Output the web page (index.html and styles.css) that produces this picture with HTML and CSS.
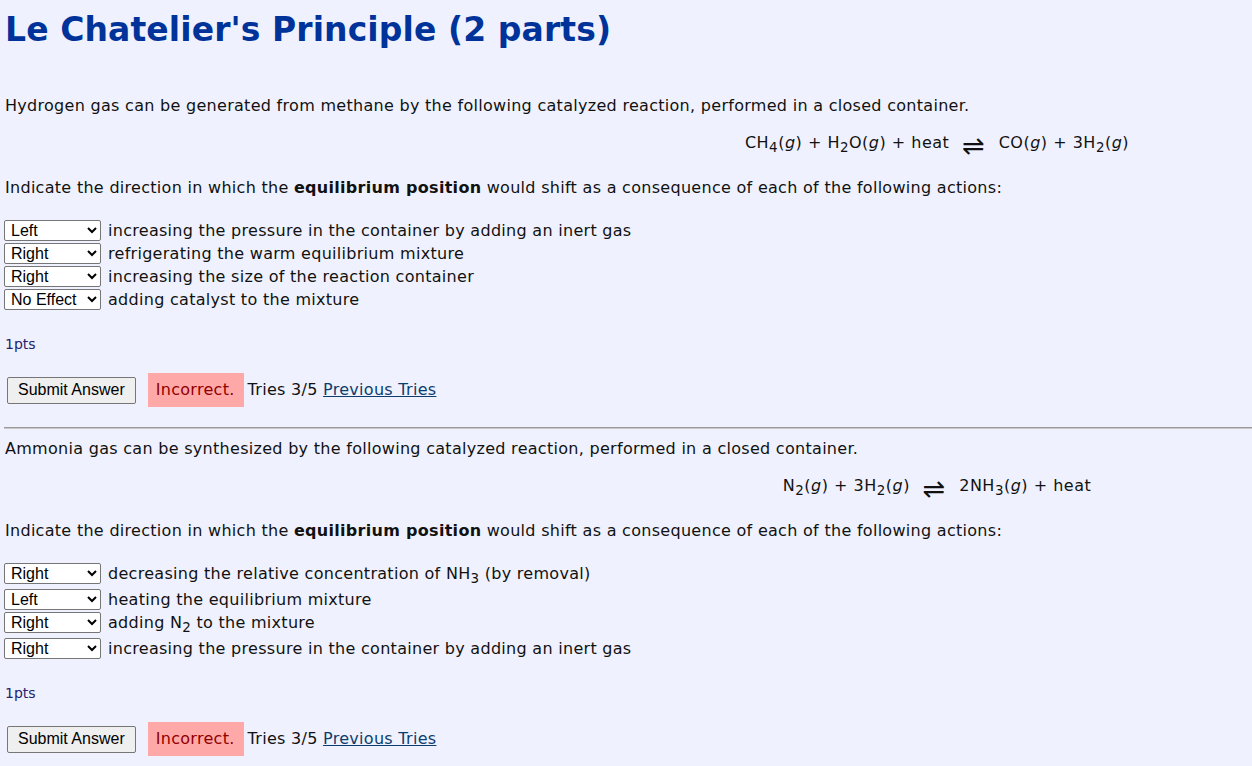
FILE: index.html
```html
<!DOCTYPE html>
<html>
<head>
<meta charset="utf-8">
<link rel="stylesheet" href="styles.css">
</head>
<body>
<h1 class="title">Le Chatelier's Principle (2 parts)</h1>

<section class="part">
  <p class="intro">Hydrogen gas can be generated from methane by the following catalyzed reaction, performed in a closed container.</p>
  <div class="equation">CH<sub>4</sub>(<i>g</i>) + H<sub>2</sub>O(<i>g</i>) + heat <span class="arrow">⇌</span> CO(<i>g</i>) + 3H<sub>2</sub>(<i>g</i>)</div>
  <p class="prompt">Indicate the direction in which the <b>equilibrium position</b> would shift as a consequence of each of the following actions:</p>
  <div class="items">
    <div class="item"><select class="choice"><option>Left</option><option>Right</option><option>No Effect</option></select><span class="label">increasing the pressure in the container by adding an inert gas</span></div>
    <div class="item"><select class="choice"><option>Left</option><option selected>Right</option><option>No Effect</option></select><span class="label">refrigerating the warm equilibrium mixture</span></div>
    <div class="item"><select class="choice"><option>Left</option><option selected>Right</option><option>No Effect</option></select><span class="label">increasing the size of the reaction container</span></div>
    <div class="item"><select class="choice"><option>Left</option><option>Right</option><option selected>No Effect</option></select><span class="label">adding catalyst to the mixture</span></div>
  </div>
  <div class="pts">1pts</div>
  <div class="submit-row">
    <button class="submit">Submit Answer</button>
    <span class="incorrect">Incorrect.</span>
    <span class="tries">Tries 3/5 <a class="prev" href="#">Previous Tries</a></span>
  </div>
</section>

<hr class="sep">

<section class="part">
  <p class="intro intro2">Ammonia gas can be synthesized by the following catalyzed reaction, performed in a closed container.</p>
  <div class="equation">N<sub>2</sub>(<i>g</i>) + 3H<sub>2</sub>(<i>g</i>) <span class="arrow">⇌</span> 2NH<sub>3</sub>(<i>g</i>) + heat</div>
  <p class="prompt">Indicate the direction in which the <b>equilibrium position</b> would shift as a consequence of each of the following actions:</p>
  <div class="items">
    <div class="item item-sub"><select class="choice"><option>Left</option><option selected>Right</option><option>No Effect</option></select><span class="label">decreasing the relative concentration of NH<sub>3</sub> (by removal)</span></div>
    <div class="item"><select class="choice"><option>Left</option><option>Right</option><option>No Effect</option></select><span class="label">heating the equilibrium mixture</span></div>
    <div class="item item-sub"><select class="choice"><option>Left</option><option selected>Right</option><option>No Effect</option></select><span class="label">adding N<sub>2</sub> to the mixture</span></div>
    <div class="item"><select class="choice"><option>Left</option><option selected>Right</option><option>No Effect</option></select><span class="label">increasing the pressure in the container by adding an inert gas</span></div>
  </div>
  <div class="pts">1pts</div>
  <div class="submit-row">
    <button class="submit">Submit Answer</button>
    <span class="incorrect">Incorrect.</span>
    <span class="tries">Tries 3/5 <a class="prev" href="#">Previous Tries</a></span>
  </div>
</section>
</body>
</html>
```

FILE: styles.css
```css
html, body {
  background: #eff1fe;
}
body {
  margin: 0 0 0 4px;
  font-family: "DejaVu Sans", Verdana, sans-serif;
  font-size: 16px;
  letter-spacing: 0.29px;
  color: #111;
}
.title {
  margin: 0;
  padding: 10px 0 0 1px;
  font-size: 33px;
  line-height: 40px;
  font-weight: bold;
  letter-spacing: 0.1px;
  color: #00339a;
}
.intro {
  margin: 46px 0 0 1px;
  line-height: 20px;
}
.intro2 {
  margin-top: 10px;
}
.equation {
  margin: 17px 0 0 50%;
  padding-right: 6px;
  text-align: center;
  line-height: 20px;
  letter-spacing: 0.5px;
}
.equation sub, .label sub {
  font-size: 0.84em;
  vertical-align: -0.32em;
  line-height: 0;
}
.arrow {
  display: inline-block;
  font-size: 27px;
  vertical-align: -7px;
  line-height: 10px;
  margin: 0 8px 0 7px;
}
.prompt {
  margin: 25px 0 0 1px;
  line-height: 20px;
}
.items {
  margin-top: 22px;
  display: flex;
  flex-direction: column;
  gap: 2px;
}
.item {
  display: flex;
  align-items: center;
  gap: 7px;
}
.item-sub {
  padding: 0 0 3px;
}
.choice {
  width: 97px;
  height: 21px;
  font-family: "Liberation Sans", Arial, sans-serif;
  font-size: 16px;
  letter-spacing: 0;
  border: 1px solid #767676;
  border-radius: 2px;
  background: #fff;
  color: #000;
  padding: 0 0 0 2px;
}
.label {
  line-height: 21px;
}
.pts {
  margin: 26px 0 0 1px;
  font-size: 14px;
  letter-spacing: 0;
  color: #24246e;
  line-height: 16px;
}
.submit-row {
  margin-top: 21px;
  display: flex;
  align-items: center;
}
.submit {
  margin: 0 0 0 3px;
  height: 27px;
  padding: 0 10px;
  font-family: "Liberation Sans", Arial, sans-serif;
  font-size: 16px;
  letter-spacing: 0;
  background: #efefef;
  border: 1px solid #767676;
  border-radius: 2px;
  color: #000;
}
.incorrect {
  margin-left: 12px;
  background: #ffa8a8;
  color: #8f0000;
  padding: 7px 9px 7px 8px;
  line-height: 20px;
}
.tries {
  margin-left: 4px;
  line-height: 20px;
}
.prev {
  color: #0d3d6e;
}
.sep {
  margin: 20px 0 0 0;
  border: none;
  border-top: 1px solid #9a9a9a;
  border-bottom: 1px solid #c8c8c8;
  height: 0;
}
```
